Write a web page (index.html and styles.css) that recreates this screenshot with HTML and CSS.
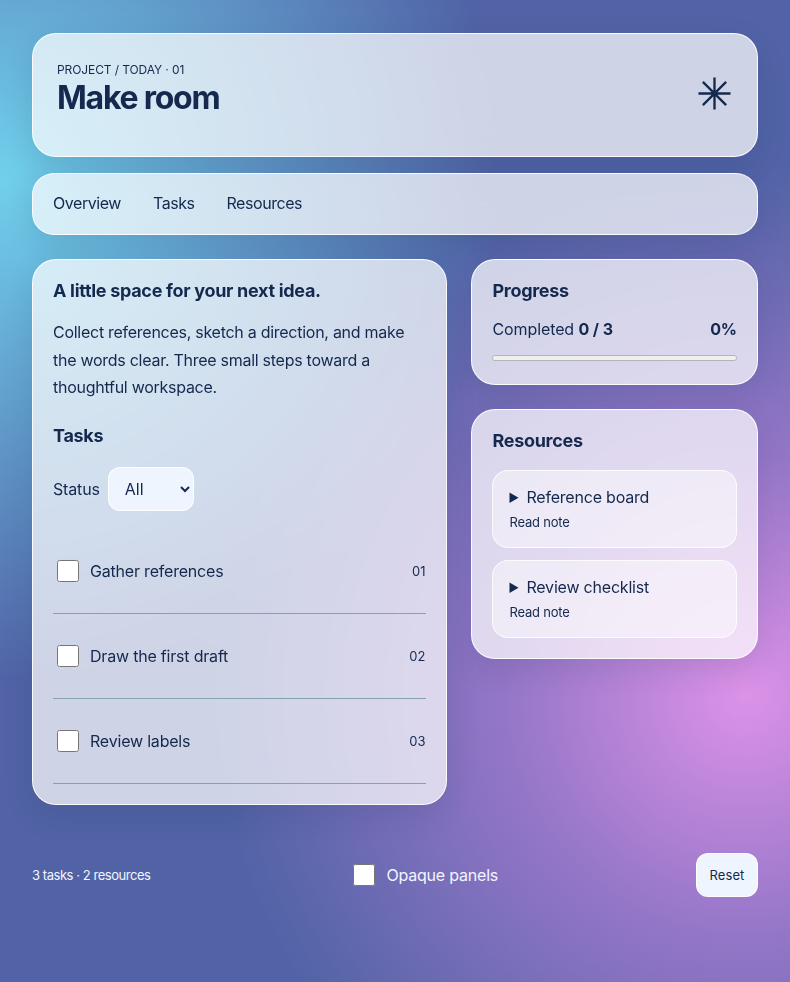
FILE: index.html
```html
<!DOCTYPE html>
<html lang="en">
<head>
<meta charset="utf-8">
<title>Make room</title>
<link rel="stylesheet" href="styles.css">
</head>
<body>
<div class="page">
  <header class="panel hero">
    <div>
      <p class="eyebrow">PROJECT / TODAY · 01</p>
      <h1>Make room</h1>
    </div>
    <svg class="star" viewBox="0 0 34 34" width="33" height="33" aria-hidden="true">
      <path d="M17 0.5V33.5M0.5 17H33.5M5 5L29 29M29 5L5 29"/>
    </svg>
  </header>
  <nav class="panel nav">
    <a href="#overview">Overview</a>
    <a href="#tasks">Tasks</a>
    <a href="#resources">Resources</a>
  </nav>
  <main class="grid">
    <section class="panel main-card" id="overview">
      <h2>A little space for your next idea.</h2>
      <p class="lead">Collect references, sketch a direction, and make the words clear. Three small steps toward a thoughtful workspace.</p>
      <h2 class="tasks-title" id="tasks">Tasks</h2>
      <label class="filter">Status
        <select><option>All</option><option>Open</option><option>Done</option></select>
      </label>
      <ul class="tasks">
        <li><label><input type="checkbox"><span>Gather references</span></label><small>01</small></li>
        <li><label><input type="checkbox"><span>Draw the first draft</span></label><small>02</small></li>
        <li><label><input type="checkbox"><span>Review labels</span></label><small>03</small></li>
      </ul>
    </section>
    <aside class="side">
      <section class="panel side-card">
        <h2>Progress</h2>
        <div class="progress-row"><span>Completed <b>0 / 3</b></span><b>0%</b></div>
        <progress value="0" max="3"></progress>
      </section>
      <section class="panel side-card" id="resources">
        <h2>Resources</h2>
        <div class="notes">
          <details><summary>Reference board</summary></details>
          <details><summary>Review checklist</summary></details>
        </div>
      </section>
    </aside>
  </main>
  <footer class="foot">
    <span class="count">3 tasks · 2 resources</span>
    <label class="opaque"><input type="checkbox"><span>Opaque panels</span></label>
    <button type="button">Reset</button>
  </footer>
</div>
</body>
</html>
```
FILE: styles.css
```css
* { box-sizing: border-box; }
html, body { margin: 0; height: 100%; }
body {
  font-family: "Inter", "Liberation Sans", sans-serif;
  color: #14294d;
  background:
    radial-gradient(circle 500px at 0 180px, rgba(112,208,236,1) 0, rgba(112,208,236,.55) 45%, rgba(112,208,236,0) 100%),
    radial-gradient(circle 530px at 745px 695px, rgba(220,146,232,1) 0, rgba(190,130,220,.62) 45%, rgba(190,130,220,0) 100%),
    #5163a6;
}
.page { height: 980px; padding: 33px 32px 0; display: flex; flex-direction: column; }
.panel {
  background: rgba(255,255,255,.72);
  border: 1px solid rgba(255,255,255,.9);
  backdrop-filter: blur(16px);
  box-shadow: 0 10px 30px rgba(20,41,77,.12);
}
.hero {
  height: 124px; border-radius: 24px; padding: 28px 26px 0 24px;
  display: flex; justify-content: space-between; align-items: flex-start;
}
.eyebrow { margin: 0; font-size: 12px; line-height: 16px; letter-spacing: -.1px; }
h1 { margin: 1px 0 0; font-size: 32px; line-height: 38px; font-weight: 700; letter-spacing: -1.25px; }
.star { margin-top: 15px; fill: none; stroke: #14294d; stroke-width: 2.4; }
.nav {
  height: 62px; margin-top: 16px; border-radius: 22px; padding: 0 20px 2px;
  display: flex; align-items: center; gap: 32px; font-size: 16px; letter-spacing: -.45px;
}
.nav a { color: #14294d; text-decoration: none; }
.grid { display: grid; grid-template-columns: 1.45fr 1fr; gap: 24px; margin-top: 24px; align-items: start; }
.main-card { border-radius: 24px; padding: 20px; }
h2 { margin: 0; font-size: 18px; line-height: 22px; font-weight: 700; letter-spacing: -.3px; }
.lead { margin: 17px 0 0; font-size: 16px; line-height: 27.5px; letter-spacing: -.27px; }
.tasks-title { margin-top: 23px; }
.filter { display: flex; align-items: center; gap: 8px; margin-top: 20px; font-size: 16px; letter-spacing: -.15px; }
select {
  width: 86px; height: 44px; padding: 0 12px; border: 1px solid rgba(255,255,255,.9);
  border-radius: 12px; background: #eef5fe; color: #14294d;
  font: inherit;
}
.tasks { list-style: none; margin: 18px 0 0; padding: 0; }
.tasks li {
  height: 85px; padding: 0 1px 0 4px; border-bottom: 1px solid #87a0b4;
  display: flex; justify-content: space-between; align-items: center;
}
.tasks label { display: flex; align-items: center; gap: 11px; font-size: 16px; height: 22px; letter-spacing: -.2px; }
input[type=checkbox] { margin: 0; width: 22px; height: 22px; }
.tasks small { font-size: 13px; line-height: 22px; }
.side { display: flex; flex-direction: column; gap: 24px; }
.side-card { border-radius: 24px; padding: 20px; }
.progress-row { display: flex; justify-content: space-between; margin-top: 16px; font-size: 16px; line-height: 22px; letter-spacing: -.1px; }
progress {
  display: block; width: 100%; height: 6px; margin: 15px 0 3px;
  appearance: none; -webkit-appearance: none;
  border: 1px solid #b4b4b4; border-radius: 4px; background: #efefef; overflow: hidden;
}
progress::-webkit-progress-bar { background: #efefef; }
progress::-webkit-progress-value { background: #14294d; }
.notes { display: flex; flex-direction: column; gap: 12px; margin-top: 18px; }
details {
  height: 78px; padding: 15px 16px 0; border-radius: 16px; font-size: 16px; letter-spacing: -.2px;
  background: rgba(255,255,255,.45); border: 1px solid rgba(255,255,255,.8);
}
details::after { content: "Read note"; display: block; font-size: 13px; margin-top: 6px; letter-spacing: -.2px; }
summary { line-height: 22px; }
.foot { display: flex; align-items: center; justify-content: space-between; margin-top: 48px; color: #f2f5ff; }
.count { font-size: 13px; letter-spacing: -.45px; }
.opaque { display: flex; align-items: center; gap: 11px; font-size: 16px; margin-left: 5px; letter-spacing: -.2px; }
button {
  width: 62px; height: 44px; border: 1px solid rgba(255,255,255,.9); border-radius: 12px;
  background: #eef5fe; color: #14294d; font: inherit; font-size: 13px; letter-spacing: .1px;
}
```
